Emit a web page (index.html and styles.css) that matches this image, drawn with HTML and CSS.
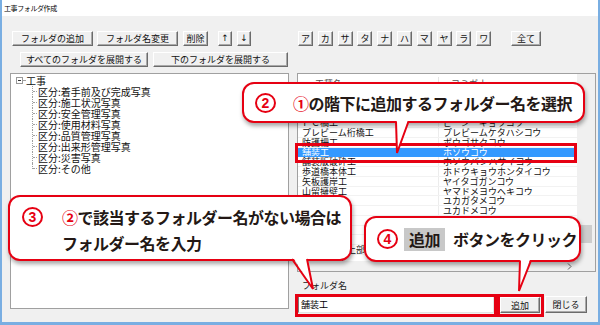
FILE: index.html
```html
<!DOCTYPE html>
<html lang="ja">
<head>
<meta charset="utf-8">
<title>工事フォルダ作成</title>
<link rel="stylesheet" href="styles.css">
</head>
<body>
<div class="window">
  <div class="titlebar">工事フォルダ作成</div>
  <div class="content">
    <div class="leftcol">
      <div class="btnrow row1">
        <div class="btn w-add">フォルダの追加</div>
        <div class="btn w-ren">フォルダ名変更</div>
        <div class="btn w-del">削除</div>
        <div class="btn w-up arrowbtn">↑</div>
        <div class="btn w-down arrowbtn">↓</div>
      </div>
      <div class="btnrow row2">
        <div class="btn w-expall">すべてのフォルダを展開する</div>
        <div class="btn w-expsub">下のフォルダを展開する</div>
      </div>
      <div class="tree">
        <div class="root"><span class="toggle"></span><span class="dash"></span><span>工事</span></div>
        <ul class="children">
          <li>区分:着手前及び完成写真</li>
          <li>区分:施工状況写真</li>
          <li>区分:安全管理写真</li>
          <li>区分:使用材料写真</li>
          <li>区分:品質管理写真</li>
          <li>区分:出来形管理写真</li>
          <li>区分:災害写真</li>
          <li>区分:その他</li>
        </ul>
      </div>
    </div>
    <div class="rightcol">
      <div class="kana">
        <div class="btn k">ア</div>
        <div class="btn k">カ</div>
        <div class="btn k">サ</div>
        <div class="btn k">タ</div>
        <div class="btn k">ナ</div>
        <div class="btn k">ハ</div>
        <div class="btn k">マ</div>
        <div class="btn k">ヤ</div>
        <div class="btn k">ラ</div>
        <div class="btn k">ワ</div>
        <div class="btn k-all">全て</div>
      </div>
      <div class="list">
        <div class="list-main">
          <div class="list-head"><span>工種名</span><span>ヨミガナ</span></div>
          <div class="rows">
            <div class="row"><span>橋台工</span><span>キョウダイコウ</span></div>
            <div class="row"><span>橋脚工</span><span>キョウキャクコウ</span></div>
            <div class="row"><span>鋼橋架設工</span><span>コウキョウカセツコウ</span></div>
            <div class="row"><span>ＰＣ橋工</span><span>ピーシーキョウコウ</span></div>
            <div class="row"><span>プレビーム桁橋工</span><span>プレビームケタハシコウ</span></div>
            <div class="row"><span>防護柵工</span><span>ボウゴサクコウ</span></div>
            <div class="row sel"><span>舗装工</span><span>ホソウコウ</span></div>
            <div class="row"><span>舗装版破砕工</span><span>ホソウバンハサイコウ</span></div>
            <div class="row"><span>歩道橋本体工</span><span>ホドウキョウホンタイコウ</span></div>
            <div class="row"><span>矢板護岸工</span><span>ヤイタゴガンコウ</span></div>
            <div class="row"><span>山留擁壁工</span><span>ヤマドメヨウヘキコウ</span></div>
            <div class="row"><span>床固め工</span><span>ユカガタメコウ</span></div>
            <div class="row"><span>床止め工</span><span>ユカドメコウ</span></div>
            <div class="row"><span>擁壁工</span><span>ヨウヘキコウ</span></div>
            <div class="row"><span>落石防護工</span><span>ラクセキボウゴコウ</span></div>
            <div class="row"><span>路盤工</span><span>ロバンコウ</span></div>
            <div class="row"><span>ＰＣ箱桁橋上部工</span><span>ピーシーハコゲタキョウ</span></div>
            <div class="row"><span>路面切削工</span><span>ロメンセッサクコウ</span></div>
          </div>
          <div class="hscroll">
            <svg class="harrow" width="5" height="7" viewBox="0 0 5 7"><path d="M1 0.5 L4 3.5 L1 6.5" fill="none" stroke="#606060" stroke-width="1"/></svg>
          </div>
        </div>
        <div class="vscroll"><div class="thumb"></div></div>
      </div>
      <div class="label">フォルダ名</div>
      <div class="inputrow">
        <div class="field">舗装工</div>
        <div class="btn b-add">追加</div>
        <div class="btn b-close">閉じる</div>
      </div>
    </div>
  </div>

  <div class="overlay">
    <div class="frame f-sel"></div>
    <div class="frame f-input"></div>
    <div class="frame f-add"></div>

    <div class="callout c2">
      <span class="num">2</span>
      <span class="txt"><span class="red">①</span>の階下に追加するフォルダー名を選択</span>
    </div>
    <svg class="tail t2" width="20" height="37" viewBox="0 0 20 37">
      <polygon points="3.5,0 15.5,0 4,34" fill="#fff"/>
      <path d="M3,2.5 L4,34 L15.5,2.5" fill="none" stroke="#e60012" stroke-width="2" stroke-linejoin="miter"/>
    </svg>

    <div class="callout c3">
      <span class="num">3</span>
      <span class="txt"><span class="red">②</span>で該当するフォルダー名がない場合は<br>フォルダー名を入力</span>
    </div>
    <svg class="tail t3" width="28" height="36" viewBox="0 0 28 36">
      <polygon points="4,0 19,0 25,32" fill="#fff"/>
      <path d="M4,3 L25,33 L19,3" fill="none" stroke="#e60012" stroke-width="2" stroke-linejoin="miter"/>
    </svg>

    <div class="callout c4">
      <span class="num">4</span>
      <span class="hl">追加</span>
      <span class="txt">ボタンをクリック</span>
    </div>
    <svg class="tail t4" width="20" height="37" viewBox="0 0 20 37">
      <polygon points="5,0 16,0 4,33" fill="#fff"/>
      <path d="M5,3.5 L4,34 L16,3.5" fill="none" stroke="#e60012" stroke-width="2" stroke-linejoin="miter"/>
    </svg>
  </div>
</div>
</body>
</html>
```

FILE: styles.css
```css
* { box-sizing: border-box; margin: 0; padding: 0; }
html, body { width: 600px; height: 325px; overflow: hidden; background: #fff; }
body { font-family: "Noto Sans CJK JP", "Noto Sans", sans-serif; color: #000; }

.window {
  position: relative;
  width: 600px;
  height: 325px;
  background: #f0f0f0;
  border-left: 2px solid #79aee2;
  border-right: 2px solid #79aee2;
  border-bottom: 3px solid #79aee2;
  display: flex;
  flex-direction: column;
}
.titlebar {
  height: 16px;
  background: #fff;
  font-size: 7px;
  line-height: 16px;
  padding-left: 2px;
  letter-spacing: -0.4px;
}
.content {
  display: grid;
  grid-template-columns: 279px 299px;
  column-gap: 8px;
  padding: 15px 0 0 8px;
}
.leftcol, .rightcol { display: flex; flex-direction: column; }

.btn {
  display: flex;
  align-items: center;
  justify-content: center;
  height: 15px;
  background: #f0f0f0;
  border: 1px solid;
  border-color: #ffffff #6b6b6b #6b6b6b #ffffff;
  box-shadow: inset -1px -1px 0 #a9a9a9;
  font-size: 9px;
  line-height: 1;
  white-space: nowrap;
  color: #111;
}
.arrowbtn { font-family: "DejaVu Sans", sans-serif; font-size: 9px; }
.btnrow { display: flex; }
.row1 { margin-left: 2px; }
.w-add { width: 81px; }
.w-ren { width: 81px; margin-left: 4px; }
.w-del { width: 25px; margin-left: 5px; }
.w-up { width: 14px; margin-left: 10px; }
.w-down { width: 14px; margin-left: 5px; }
.row2 { margin: 6px 0 0 10px; }
.w-expall { width: 128px; }
.w-expsub { width: 135px; margin-left: 5px; }

.tree {
  margin-top: 6px;
  height: 236px;
  background: #fff;
  border: 1px solid #a0a0a0;
  padding: 1px 0 0 5px;
  font-size: 10px;
  line-height: 11px;
  color: #111;
}
.root { display: flex; align-items: center; height: 11px; }
.toggle {
  position: relative;
  width: 7px;
  height: 7px;
  border: 1px solid #9a9a9a;
  background: #fff;
}
.toggle::after {
  content: "";
  position: absolute;
  left: 1px;
  top: 2px;
  width: 3px;
  height: 1px;
  background: #333;
}
.dash { width: 2px; margin-right: 1px; border-top: 1px dotted #a0a0a0; }
.children { list-style: none; margin-left: 16px; }
.children li { position: relative; height: 11px; padding-left: 6px; white-space: nowrap; }
.children li::before {
  content: "";
  position: absolute;
  left: 0;
  top: 0;
  height: 11px;
  border-left: 1px dotted #a0a0a0;
}
.children li:last-child::before { height: 6px; }
.children li::after {
  content: "";
  position: absolute;
  left: 1px;
  top: 5px;
  width: 4px;
  border-top: 1px dotted #a0a0a0;
}

.kana { display: flex; margin-left: 1px; }
.k { width: 15px; margin-right: 4.8px; }
.k-all { width: 30px; margin-left: 15px; }

.list {
  margin-top: 27px;
  height: 199px;
  background: #fff;
  border: 1px solid #a0a0a0;
  display: flex;
}
.list-main { flex: 1; display: flex; flex-direction: column; min-width: 0; }
.list-head {
  height: 15px;
  flex: none;
  display: grid;
  grid-template-columns: 140px 1fr;
  border-bottom: 1px solid #e5e5e5;
  font-size: 9px;
  line-height: 14px;
  padding-top: 3px;
  color: #555;
}
.list-head span { padding-left: 17px; }
.list-head span + span { border-left: 1px solid #e5e5e5; padding-left: 12px; }
.rows { flex: 1; overflow: hidden; }
.row {
  height: 9.76px;
  display: grid;
  grid-template-columns: 140px 1fr;
  font-size: 9px;
  line-height: 9.76px;
  border-bottom: 1px solid #f2f2f2;
  color: #111;
}
.row span { padding-left: 4px; overflow: hidden; white-space: nowrap; }
.row span + span { border-left: 1px solid #ececec; }
.row.sel { background: #3399ff; color: #fff; border-bottom-color: #3399ff; }
.row.sel span + span { border-left-color: #3399ff; }
.hscroll {
  height: 10px;
  flex: none;
  background: #f0f0f0;
  display: flex;
  justify-content: flex-end;
  align-items: center;
  padding-right: 5px;
}
.vscroll { width: 18px; background: #f0f0f0; display: flex; flex-direction: column; }
.thumb { margin: 151px 3px 0 4px; height: 18px; background: #cdcdcd; }

.label { margin-top: 8px; height: 11px; font-size: 9px; line-height: 11px; padding-left: 5px; color: #222; }
.inputrow { display: flex; margin-top: 5px; align-items: flex-start; }
.field {
  margin-left: 1px;
  width: 196px;
  height: 17px;
  background: #fff;
  border: 1px solid;
  border-color: #7a7a7a #e3e3e3 #e3e3e3 #7a7a7a;
  font-size: 9px;
  line-height: 15px;
  padding-left: 2px;
}
.b-add { width: 40px; height: 16px; margin: 1px 0 0 6px; }
.b-close { width: 42px; height: 17px; margin-left: 5px; }

/* overlay annotations */
.overlay { position: absolute; left: -2px; top: 0; width: 600px; height: 325px; pointer-events: none; }
.frame { position: absolute; border: 3px solid #e60012; }
.f-sel { left: 295px; top: 143px; width: 282px; height: 20px; }
.f-input { left: 295px; top: 294px; width: 202px; height: 23px; }
.f-add { left: 497px; top: 294px; width: 47px; height: 23px; }

.callout {
  position: absolute;
  background: #fff;
  border: 2px solid #e60012;
  border-radius: 12px;
  box-shadow: 1px 3px 4px rgba(0, 0, 0, 0.35);
  font-weight: 700;
  font-size: 16px;
  letter-spacing: -0.5px;
  color: #231815;
  display: flex;
  align-items: center;
  white-space: nowrap;
}
.c2 { left: 242px; top: 82px; width: 343px; height: 41px; padding-left: 11px; }
.c3 { left: 8px; top: 195px; width: 344px; height: 66px; padding: 7px 0 0 12px; align-items: flex-start; }
.c4 { left: 364px; top: 216px; width: 217px; height: 46px; padding-left: 11px; }
.num {
  flex: none;
  width: 21px;
  height: 20px;
  border: 2px solid #e60012;
  border-radius: 50%;
  color: #e60012;
  font-family: "Liberation Sans", sans-serif;
  font-weight: 700;
  font-size: 14px;
  letter-spacing: 0;
  display: flex;
  align-items: center;
  justify-content: center;
}
.red { color: #e60012; }
.c2 .txt { margin-left: 17px; }
.c3 .num { margin-top: 3px; }
.c3 .txt { margin-left: 19px; line-height: 26px; }
.c4 .hl {
  margin-left: 6px;
  background: #c8c8c8;
  height: 23px;
  padding: 0 5px;
  display: flex;
  align-items: center;
}
.c4 .txt { margin-left: 8px; }

.tail { position: absolute; overflow: visible; }
.t2 { left: 393px; top: 119px; }
.t3 { left: 288px; top: 256px; }
.t4 { left: 515px; top: 257px; }
```
